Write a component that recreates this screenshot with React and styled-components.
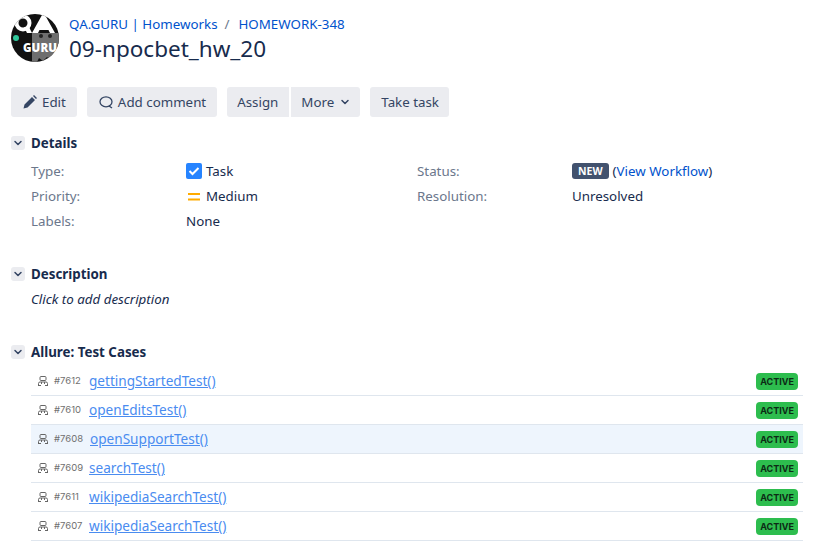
import React from 'react';
import styled, { createGlobalStyle } from 'styled-components';
import { ChevronDown } from 'lucide-react';

const GlobalStyle = createGlobalStyle`
  html, body {
    margin: 0;
    padding: 0;
    background: #fff;
    overflow: hidden;
  }
  body {
    font-family: 'Noto Sans', sans-serif;
    font-size: 13.33px;
    line-height: 20px;
    color: #172b4d;
  }
`;

const Page = styled.div`
  width: 817px;
  height: 555px;
  padding: 14px 14px 0 11px;
  box-sizing: border-box;
`;

const Header = styled.header`
  display: flex;
  align-items: flex-start;
  gap: 10px;
  height: 48px;
`;

const Crumbs = styled.div`
  display: flex;
  height: 20px;
  line-height: 20px;
`;

const CrumbLink = styled.a`
  color: #0052cc;
`;

const Slash = styled.span`
  color: #6b778c;
  margin: 0 9px 0 7px;
`;

const Title = styled.h1`
  margin: 0;
  font-size: 22.5px;
  font-weight: 400;
  line-height: 30px;
  color: #172b4d;
`;

const Toolbar = styled.div`
  display: flex;
  margin-top: 25px;
  height: 30px;
`;

const Button = styled.button`
  display: flex;
  align-items: center;
  gap: ${({ $gap }) => $gap || 0}px;
  height: 30px;
  padding: 0 ${({ $right }) => $right ?? 11}px 0 ${({ $left }) => $left ?? 11}px;
  margin: 0 ${({ $after }) => $after ?? 10}px 0 0;
  border: 0;
  border-radius: ${({ $radius }) => $radius || '3px'};
  background: #ebecf0;
  color: #344563;
  font: 13.33px/20px 'Noto Sans', sans-serif;
`;

const Section = styled.section`
  margin-top: ${({ $top }) => $top}px;
`;

const SectionHead = styled.div`
  display: flex;
  align-items: center;
  gap: 6px;
  height: 20px;
`;

const Toggle = styled.span`
  display: flex;
  align-items: center;
  justify-content: center;
  width: 14px;
  height: 14px;
  border-radius: 3px;
  background: #ebecf0;
  color: #344563;
`;

const SectionTitle = styled.h2`
  margin: 0;
  font-size: 13.33px;
  font-weight: 700;
  line-height: 20px;
  color: #172b4d;
`;

const Details = styled.div`
  display: grid;
  grid-template-columns: 155px 231px 155px 1fr;
  grid-auto-rows: 25px;
  margin: 5px 0 0 20px;
`;

const Label = styled.div`
  display: flex;
  align-items: center;
  height: 25px;
  color: #6b778c;
`;

const Value = styled.div`
  display: flex;
  align-items: center;
  gap: ${({ $gap }) => $gap || 0}px;
  height: 25px;
`;

const Lozenge = styled.span`
  background: #42526e;
  color: #fff;
  font-size: 10.5px;
  font-weight: 700;
  line-height: 16px;
  height: 16px;
  padding: 0 6px;
  border-radius: 3px;
  margin-right: 4px;
`;

const Description = styled.div`
  margin: 5px 0 0 20px;
  font-style: italic;
  color: #172b4d;
`;

const CaseList = styled.div`
  margin: 5px 0 0 20px;
  width: 772px;
`;

const CaseRow = styled.div`
  display: flex;
  align-items: center;
  height: 28px;
  border-bottom: 1px solid #dfe6ee;
  background: ${({ $active }) => ($active ? '#eef5fd' : 'transparent')};
  padding: 0 5px 0 6px;
`;

const CaseId = styled.span`
  flex: none;
  width: 30px;
  margin: 0 5px;
  font-family: Inter, sans-serif;
  font-size: 9.5px;
  color: #707070;
`;

const CaseName = styled.a`
  flex: 1;
  margin-left: ${({ $active }) => ($active ? 1 : 0)}px;
  color: #4a8cf0;
  font-size: 13.6px;
  text-decoration: underline;
`;

const Active = styled.span`
  background: #2dbd4e;
  color: #0c2a15;
  font-family: Inter, sans-serif;
  font-size: 9px;
  font-weight: 700;
  line-height: 17px;
  height: 17px;
  padding: 0 4px;
  border-radius: 4px;
`;

const Logo = () => (
  <svg width="48" height="48" viewBox="0 0 48 48" style={{ flex: 'none' }}>
    <defs>
      <clipPath id="logoClip">
        <circle cx="24" cy="24" r="24" />
      </clipPath>
    </defs>
    <g clipPath="url(#logoClip)">
      <rect width="48" height="48" fill="#111" />
      <path d="M21 19h27v23l-4 0-4 4-4-3-4 4-4-3-3 6h-4z" fill="#6e6e6e" />
      <circle cx="12" cy="9" r="6.500" fill="none" stroke="#fff" strokeWidth="4" />
      <path d="M13 13l5 0 3 6-5 0z" fill="#fff" />
      <path d="M21 19L31 1h3L44 19h-5l-1.500-3h-9L27 19z" fill="#fff" />
      <circle cx="30" cy="22" r="2" fill="#222" />
      <circle cx="39" cy="22" r="2" fill="#222" />
      <circle cx="5" cy="24" r="3" fill="#2fc79a" />
    </g>
    <text x="12" y="38" fontFamily="'Noto Sans', sans-serif" fontSize="11.500" fontWeight="900" fill="#fff" textLength="34">GURU</text>
  </svg>
);

const PencilIcon = () => (
  <svg width="14" height="14" viewBox="0 0 14 14">
    <path d="M0.500 13.500l1-4 7.500-7.500 3 3-7.500 7.500zM10 1l1-1 3 3-1 1z" fill="#344563" />
  </svg>
);

const CommentIcon = () => (
  <svg width="14" height="14" viewBox="0 0 14 14" fill="none">
    <ellipse cx="7" cy="6.800" rx="6" ry="5" stroke="#344563" strokeWidth="1.300" />
    <path d="M10 11l3 2" stroke="#344563" strokeWidth="1.300" />
  </svg>
);

const TaskIcon = () => (
  <svg width="16" height="16" viewBox="0 0 16 16">
    <rect width="16" height="16" rx="2" fill="#2684ff" />
    <path d="M3.500 8l3 3 6-6" fill="none" stroke="#fff" strokeWidth="2" />
  </svg>
);

const MediumIcon = () => (
  <svg width="16" height="16" viewBox="0 0 16 16">
    <path d="M2 5h12v2H2zM2 10.500h12v2H2z" fill="#ffab00" />
  </svg>
);

const RobotIcon = () => (
  <svg width="12" height="12" viewBox="0 0 12 12" fill="none" stroke="#666" strokeWidth="1" style={{ flex: 'none', marginTop: -1 }}>
    <rect x="3" y="1.500" width="6" height="4" rx="1" />
    <path d="M1.500 10.500V8.500q0-1.500 1.500-1.500h6q1.500 0 1.500 1.500v2M1 10.500h3M8 10.500h3M4.500 7v2M7.500 7v2" />
  </svg>
);

const SectionHeader = ({ children }) => (
  <SectionHead>
    <Toggle>
      <ChevronDown size={12} strokeWidth={3} />
    </Toggle>
    <SectionTitle>{children}</SectionTitle>
  </SectionHead>
);

const testCases = [
  { id: '#7612', name: 'gettingStartedTest()' },
  { id: '#7610', name: 'openEditsTest()' },
  { id: '#7608', name: 'openSupportTest()', active: true },
  { id: '#7609', name: 'searchTest()' },
  { id: '#7611', name: 'wikipediaSearchTest()' },
  { id: '#7607', name: 'wikipediaSearchTest()' },
];

const App = () => (
  <Page>
    <GlobalStyle />
    <Header>
      <Logo />
      <div>
        <Crumbs>
          <CrumbLink>QA.GURU | Homeworks</CrumbLink>
          <Slash>/</Slash>
          <CrumbLink>HOMEWORK-348</CrumbLink>
        </Crumbs>
        <Title>09-npocbet_hw_20</Title>
      </div>
    </Header>

    <Toolbar>
      <Button $gap={5} $left={12}>
        <PencilIcon />
        Edit
      </Button>
      <Button $gap={5} $left={12} $right={11}>
        <CommentIcon />
        Add comment
      </Button>
      <Button $after={2} $left={10} $right={11} $radius="3px 0 0 3px">Assign</Button>
      <Button $gap={5} $left={10} $right={9} $radius="0 3px 3px 0">
        More
        <ChevronDown size={12} strokeWidth={3} />
      </Button>
      <Button $left={11} $right={10}>Take task</Button>
    </Toolbar>

    <Section $top={16}>
      <SectionHeader>Details</SectionHeader>
      <Details>
        <Label>Type:</Label>
        <Value $gap={4}>
          <TaskIcon />
          Task
        </Value>
        <Label>Status:</Label>
        <Value>
          <Lozenge>NEW</Lozenge>
          (<CrumbLink>View Workflow</CrumbLink>)
        </Value>
        <Label>Priority:</Label>
        <Value $gap={4}>
          <MediumIcon />
          Medium
        </Value>
        <Label>Resolution:</Label>
        <Value>Unresolved</Value>
        <Label>Labels:</Label>
        <Value>None</Value>
      </Details>
    </Section>

    <Section $top={31}>
      <SectionHeader>Description</SectionHeader>
      <Description>Click to add description</Description>
    </Section>

    <Section $top={33}>
      <SectionHeader>Allure: Test Cases</SectionHeader>
      <CaseList>
        {testCases.map(test => (
          <CaseRow key={test.id} $active={test.active}>
            <RobotIcon />
            <CaseId>{test.id}</CaseId>
            <CaseName $active={test.active}>{test.name}</CaseName>
            <Active>ACTIVE</Active>
          </CaseRow>
        ))}
      </CaseList>
    </Section>
  </Page>
);

export default App;
